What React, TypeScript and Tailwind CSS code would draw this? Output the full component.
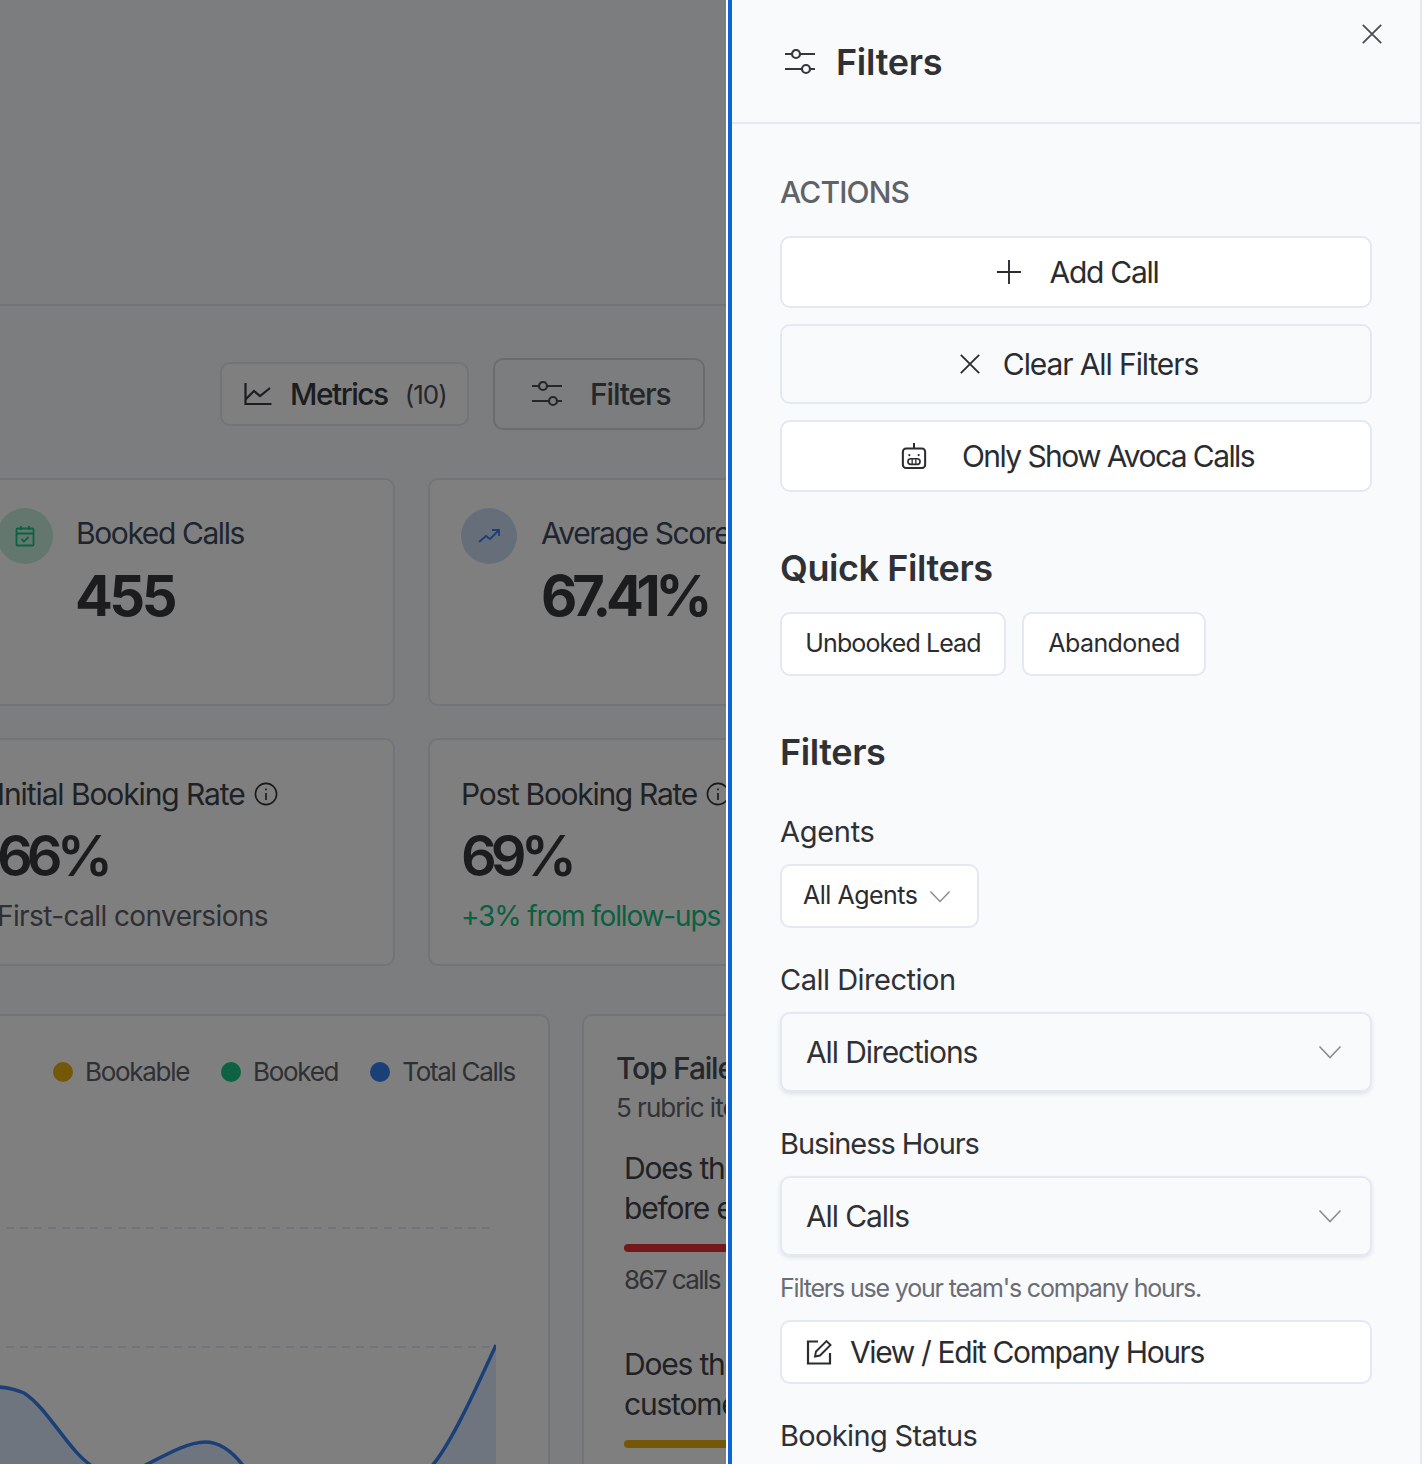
const SlidersIcon = ({ className }: { className?: string }) => (
  <svg viewBox="0 0 30 26" fill="none" stroke="currentColor" strokeWidth="2.2" className={className}>
    <path d="M0 5h7M15 5h15M0 20h17M25 20h5" />
    <circle cx="11" cy="5" r="4" />
    <circle cx="21" cy="20" r="4" />
  </svg>
);

const Chevron = ({ className }: { className?: string }) => (
  <svg viewBox="0 0 24 14" fill="none" stroke="currentColor" strokeWidth="1.6" className={className}>
    <path d="M1.5 1.5 12 12.5 22.5 1.5" />
  </svg>
);

const CrossIcon = () => (
  <svg viewBox="0 0 20 20" fill="none" stroke="currentColor" strokeWidth="1.8" className="w-[20px] h-[20px]">
    <path d="M.8.8l18.4 18.4M19.2.8.8 19.2" />
  </svg>
);

const InfoIcon = () => (
  <svg viewBox="0 0 24 24" fill="none" stroke="currentColor" strokeWidth="1.6" className="w-[24px] h-[24px] shrink-0 text-[#2e2f33]">
    <circle cx="12" cy="12" r="10.6" />
    <path d="M12 11v7M12 6.6v1.6" />
  </svg>
);

const Dot = ({ color, label }: { color: string; label: string }) => (
  <div className="flex items-center gap-[12px]">
    <span className={`w-[20px] h-[20px] rounded-full ${color}`} />
    <span>{label}</span>
  </div>
);

const actionBtn =
  "flex items-center justify-center w-full border-2 border-[#e3e8f1] rounded-[10px] text-[30px] text-[#2a2c30]";

const Label = ({ children, className }: { children: string; className?: string }) => (
  <div className={`text-[29px] leading-[36px] text-[#2f3135] ${className ?? ""}`}>{children}</div>
);

const SelectBox = ({ value }: { value: string }) => (
  <div className="mt-[14px] h-[80px] flex items-center justify-between pl-[24px] pr-[28px] border-2 border-[#e3e8f1] rounded-[10px] shadow-[0_2px_4px_rgba(30,50,90,0.12)] text-[30px] tracking-[-1.1px] text-[#2f3135]">
    <span>{value}</span>
    <Chevron className="w-[24px] h-[14px] text-[#8a8d92]" />
  </div>
);

const Dashboard = () => (
  <div className="relative w-[726px] shrink-0 h-full overflow-hidden bg-[#f8fafc] whitespace-nowrap">
    <div className="h-[306px] border-b-2 border-[#e3e8f1]" />

    {/* toolbar */}
    <div className="mt-[52px] h-[72px] pr-[21px] flex items-center justify-end gap-[24px]">
      <div className="h-[64px] w-[249px] pl-[22px] flex items-center border-2 border-[#e3e8f1] rounded-[10px] bg-white">
        <svg viewBox="0 0 28 24" fill="none" stroke="#363a40" strokeWidth="2.2" className="w-[28px] h-[24px]">
          <path d="M1.5 1v21h26M2 17l8-8 6 5 10-8" />
        </svg>
        <span className="ml-[18px] text-[30px] font-medium tracking-[-1.5px] text-[#363a40]">Metrics</span>
        <span className="ml-[17px] text-[26px] tracking-[-1px] text-[#4a4e55]">(10)</span>
      </div>
      <div className="h-[72px] w-[212px] pl-[37px] flex items-center border-2 border-[#d5d9e0] rounded-[10px]">
        <SlidersIcon className="w-[30px] h-[26px] text-[#4a4e55]" />
        <span className="ml-[28px] text-[30px] font-medium tracking-[-1.15px] text-[#4a4e55]">Filters</span>
      </div>
    </div>

    {/* stat cards */}
    <div className="mt-[48px] ml-[-36px] grid grid-cols-[431px_431px] gap-x-[33px] gap-y-[32px]">
      <div className="h-[228px] bg-white border-2 border-[#e3e8f1] rounded-[10px] pl-[31px] pt-[28px] flex gap-[23px]">
        <div className="w-[56px] h-[56px] rounded-full bg-[#c6efdc] flex items-center justify-center">
          <svg viewBox="0 0 24 24" fill="none" stroke="#1cc488" strokeWidth="1.8" className="w-[24px] h-[24px]">
            <rect x="3.5" y="4.5" width="17" height="17" rx="1" />
            <path d="M3.5 9.5h17M8 2v4M16 2v4M8.5 15l2.5 2.5 4.5-4.5" />
          </svg>
        </div>
        <div>
          <div className="text-[30px] leading-[36px] mt-[7px] tracking-[-1.4px] text-[#3f4a5e]">Booked Calls</div>
          <div className="text-[56px] leading-[64px] mt-[13px] ml-[-1px] font-bold tracking-[-3.5px] text-[#37393c]">455</div>
        </div>
      </div>
      <div className="h-[228px] bg-white border-2 border-[#e3e8f1] rounded-[10px] pl-[31px] pt-[28px] flex gap-[24px]">
        <div className="w-[56px] h-[56px] rounded-full bg-[#cddcf5] flex items-center justify-center">
          <svg viewBox="0 0 24 24" fill="none" stroke="#3680f0" strokeWidth="1.8" className="w-[24px] h-[24px]">
            <path d="M2 18l7-6 4 3 9-9M15 6h7v6" />
          </svg>
        </div>
        <div>
          <div className="text-[30px] leading-[36px] mt-[7px] tracking-[-1.4px] text-[#3f4a5e]">Average Score</div>
          <div className="text-[56px] leading-[64px] mt-[13px] font-bold tracking-[-5.2px] text-[#37393c]">67.41%</div>
        </div>
      </div>

      <div className="h-[228px] bg-white border-2 border-[#e3e8f1] rounded-[10px] pl-[31px] pt-[36px]">
        <div className="flex items-center gap-[9px] text-[30px] leading-[36px] tracking-[-1.1px] text-[#3f4249]">
          <span>Initial Booking Rate</span>
          <InfoIcon />
        </div>
        <div className="text-[56px] leading-[64px] mt-[12px] font-semibold tracking-[-6px] text-[#37393c]">66%</div>
        <div className="text-[28px] leading-[36px] mt-[10px] tracking-[-0.6px] text-[#5e6167]">First-call conversions</div>
      </div>
      <div className="h-[228px] bg-white border-2 border-[#e3e8f1] rounded-[10px] pl-[31px] pt-[36px]">
        <div className="flex items-center gap-[9px] text-[30px] leading-[36px] tracking-[-1.3px] text-[#3f4249]">
          <span>Post Booking Rate</span>
          <InfoIcon />
        </div>
        <div className="text-[56px] leading-[64px] mt-[12px] font-semibold tracking-[-6px] text-[#37393c]">69%</div>
        <div className="text-[28px] leading-[36px] mt-[10px] tracking-[-1.15px] text-[#14c080]">+3% from follow-ups</div>
      </div>
    </div>

    {/* chart + failed items */}
    <div className="mt-[48px] ml-[-36px] flex gap-[32px]">
      <div className="w-[586px] h-[500px] shrink-0 bg-white border-2 border-[#e3e8f1] rounded-[10px] overflow-hidden">
        <div className="mt-[40px] pr-[33px] flex justify-end gap-[32px] text-[26px] leading-[32px] tracking-[-1.3px] text-[#5e6167]">
          <Dot color="bg-[#e8b010]" label="Bookable" />
          <Dot color="bg-[#1cc488]" label="Booked" />
          <Dot color="bg-[#3680f0]" label="Total Calls" />
        </div>
        <svg viewBox="0 0 532 280" fill="none" className="mt-[110px] ml-[-2px] w-[532px] h-[280px]">
          <path d="M0 30H532M0 149H532" stroke="#e3e8f1" strokeWidth="2" strokeDasharray="8 6" />
          <path
            d="M0 190C20 188 42 187 60 195C85 211 105 255 131 270L176 270C205 255 225 244 241 244C256 244 270 255 281 270L466 270C485 250 510 195 532 147V270H0Z"
            fill="#3680f0"
            fillOpacity="0.16"
          />
          <path
            d="M0 190C20 188 42 187 60 195C85 211 105 255 131 270M176 270C205 255 225 244 241 244C256 244 270 255 281 270M466 270C485 250 510 195 532 147"
            stroke="#3680f0"
            strokeWidth="3.5"
          />
        </svg>
      </div>
      <div className="w-[400px] shrink-0 h-[500px] bg-white border-2 border-[#e3e8f1] rounded-[10px] pl-[32px] pt-[34px]">
        <div className="text-[30px] leading-[36px] font-medium tracking-[-1.2px] text-[#4a4e55]">Top Failed</div>
        <div className="text-[26px] leading-[32px] mt-[6px] tracking-[-1px] text-[#62666c]">5 rubric items</div>
        <div className="ml-[8px] mt-[24px] tracking-[-1.2px]">
          <div className="text-[30px] leading-[40px] text-[#3f4249]">Does the</div>
          <div className="text-[30px] leading-[40px] text-[#3f4249]">before end</div>
          <div className="h-[8px] mt-[16px] rounded-full bg-[#e83038]" />
          <div className="text-[26px] leading-[32px] mt-[12px] tracking-[-1.6px] text-[#62666c]">867 calls</div>
          <div className="text-[30px] leading-[40px] mt-[48px] text-[#3f4249]">Does the</div>
          <div className="text-[30px] leading-[40px] text-[#3f4249]">customer</div>
          <div className="h-[8px] mt-[16px] rounded-full bg-[#e8b010]" />
        </div>
      </div>
    </div>

    {/* scrim */}
    <div className="absolute inset-0 bg-black/50" />
  </div>
);

const FilterDrawer = () => (
  <aside className="ml-[2px] w-[694px] h-full shrink-0 overflow-hidden border-l-4 border-[#0b66d8] border-r-2 border-r-[#e3e8f1] bg-[#f9fafc] text-[#2f3135] whitespace-nowrap">
    <div className="relative h-[124px] border-b-2 border-[#e3e8f1] flex items-center pl-[53px] pt-[2px]">
      <SlidersIcon className="w-[30px] h-[26px] text-[#35373b]" />
      <h1 className="ml-[21px] text-[36px] font-semibold tracking-[-0.3px] text-[#2f3135]">Filters</h1>
      <button className="absolute right-[38px] top-[24px] text-[#4a4d52]">
        <CrossIcon />
      </button>
    </div>

    <div className="px-[48px]">
      <div className="mt-[50px] text-[30px] leading-[36px] font-medium tracking-[-0.85px] text-[#5f6368]">ACTIONS</div>
      <div className="mt-[26px] flex flex-col gap-[16px]">
        <button className={`${actionBtn} h-[72px] bg-white gap-[29px] pl-[3px] tracking-[-1.3px]`}>
          <svg viewBox="0 0 24 24" fill="none" stroke="currentColor" strokeWidth="1.9" className="w-[24px] h-[24px]">
            <path d="M12 0v24M0 12h24" />
          </svg>
          <span>Add Call</span>
        </button>
        <button className={`${actionBtn} h-[80px] gap-[23px] pl-[6px] tracking-[-1.1px]`}>
          <CrossIcon />
          <span>Clear All Filters</span>
        </button>
        <button className={`${actionBtn} h-[72px] bg-white gap-[35px] pl-[3px] tracking-[-1.6px]`}>
          <svg viewBox="0 0 28 30" fill="none" stroke="currentColor" strokeWidth="2.2" className="w-[26px] h-[28px]">
            <path d="M14 1v6" />
            <rect x="2" y="7" width="24" height="21" rx="3.5" />
            <circle cx="9" cy="14" r="1.2" fill="currentColor" stroke="none" />
            <circle cx="19" cy="14" r="1.2" fill="currentColor" stroke="none" />
            <rect x="7.5" y="18" width="13" height="6" rx="3" strokeWidth="1.8" />
            <path d="M12 18v6M16 18v6" strokeWidth="1.4" />
          </svg>
          <span>Only Show Avoca Calls</span>
        </button>
      </div>

      <h2 className="mt-[54px] text-[36px] leading-[44px] font-semibold tracking-[-0.42px]">Quick Filters</h2>
      <div className="mt-[22px] flex gap-[16px]">
        <button className="h-[64px] w-[226px] bg-white border-2 border-[#e3e8f1] rounded-[10px] text-[25px] tracking-[-0.9px] text-[#2a2c30]">Unbooked Lead</button>
        <button className="h-[64px] w-[184px] bg-white border-2 border-[#e3e8f1] rounded-[10px] text-[25px] tracking-[-0.55px] text-[#2a2c30]">Abandoned</button>
      </div>

      <h2 className="mt-[54px] text-[36px] leading-[44px] font-semibold tracking-[-0.4px]">Filters</h2>

      <Label className="mt-[40px] tracking-[-0.3px]">Agents</Label>
      <div className="mt-[14px] h-[64px] w-[199px] bg-white border-2 border-[#e3e8f1] rounded-[10px] pl-[21px] flex items-center gap-[12px] text-[25px] tracking-[-0.5px] text-[#2a2c30]">
        <span>All Agents</span>
        <Chevron className="w-[22px] h-[13px] text-[#8a8d92]" />
      </div>

      <Label className="mt-[34px] tracking-[-0.5px]">Call Direction</Label>
      <SelectBox value="All Directions" />

      <Label className="mt-[34px] tracking-[-1.05px]">Business Hours</Label>
      <SelectBox value="All Calls" />

      <div className="mt-[16px] text-[25px] leading-[32px] tracking-[-1.18px] text-[#6a6d73]">Filters use your team's company hours.</div>
      <button className="mt-[16px] h-[64px] w-full bg-white border-2 border-[#e3e8f1] rounded-[10px] pl-[24px] flex items-center gap-[18px] text-[30px] tracking-[-1.38px] text-[#2a2c30]">
        <svg viewBox="0 0 26 26" fill="none" stroke="currentColor" strokeWidth="2.2" className="w-[26px] h-[26px]">
          <path d="M12 2.5H2v22h22V14" />
          <path d="M9 17.5l1-5L20.5 2l4 4L14 16.5z" strokeWidth="1.9" />
        </svg>
        <span>View / Edit Company Hours</span>
      </button>

      <Label className="mt-[34px] tracking-[-0.65px]">Booking Status</Label>
    </div>
  </aside>
);

export default function App() {
  return (
    <div className="w-[1424px] h-[1464px] flex overflow-hidden bg-white font-[family-name:Inter,sans-serif]">
      <Dashboard />
      <FilterDrawer />
    </div>
  );
}
